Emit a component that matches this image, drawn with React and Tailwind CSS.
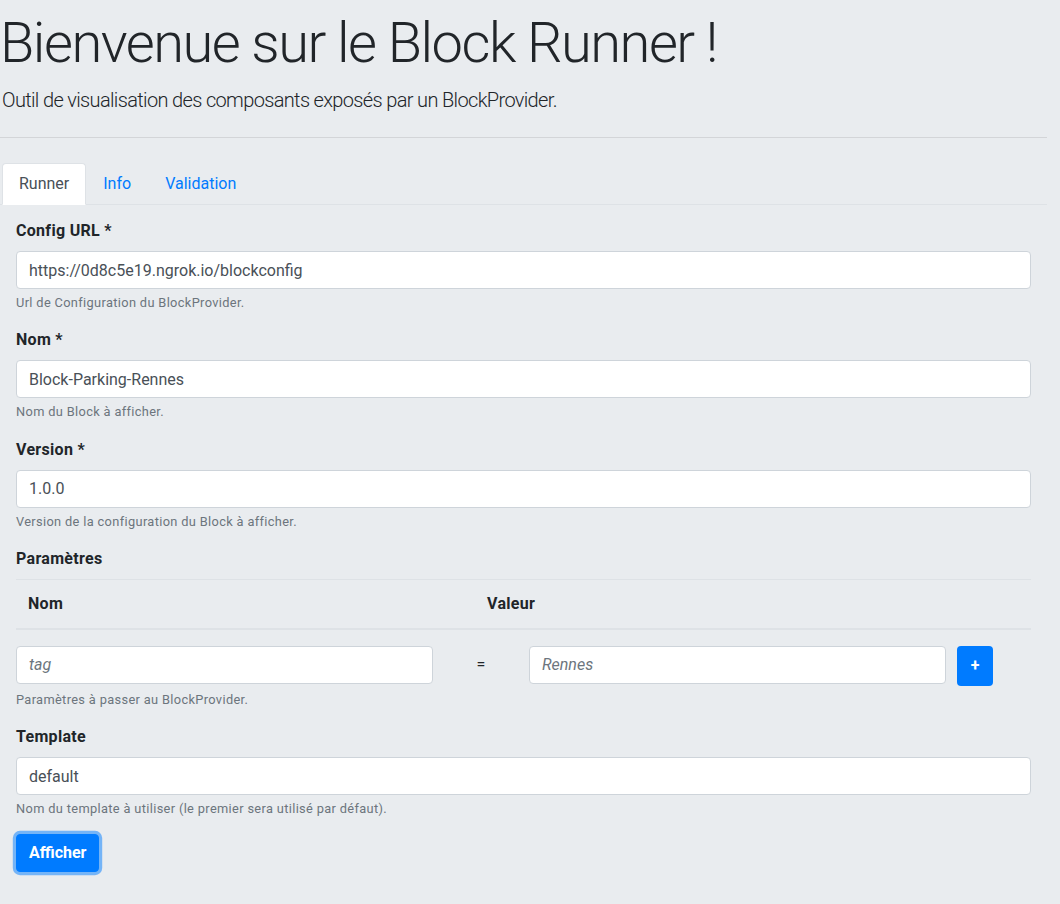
import React from "react";

const Field = ({ label, value, help }) => (
  <div className="mb-4">
    <label className="block mb-2 font-bold leading-6 tracking-[0.3px] text-[#212529]">{label}</label>
    <input
      type="text"
      defaultValue={value}
      className="block w-full h-[38px] px-3 bg-white border border-[#ced4da] rounded text-[#495057] leading-6 outline-none"
    />
    <small className="block mt-1 text-[12.8px] leading-[19.2px] tracking-[0.35px] text-[#6c757d]">{help}</small>
  </div>
);

export default function App() {
  return (
    <div
      className="min-h-screen bg-[#e9ecef] text-[#212529] text-base"
      style={{ fontFamily: "Roboto, 'Liberation Sans', sans-serif" }}
    >
      <div className="w-[1047px]">
        {/* Header */}
        <h1 className="pt-[10px] text-[56px] font-light leading-[1.2] tracking-[-1.5px]">
          Bienvenue sur le Block Runner !
        </h1>
        <p className="mt-[8px] text-[20px] font-light leading-[30px] tracking-[-0.65px] pl-[2px]">
          Outil de visualisation des composants exposés par un BlockProvider.
        </p>
        <hr className="mt-[22px] border-0 border-t border-[#d3d5d8]" />

        {/* Tabs */}
        <ul className="mt-[25px] flex pl-[2px] border-b border-[#dee2e6]">
          <li className="-mb-px">
            <span className="block px-4 py-2 leading-6 text-[#495057] bg-white border border-[#dee2e6] border-b-white rounded-t">
              Runner
            </span>
          </li>
          <li className="-mb-px">
            <a className="block px-4 py-2 leading-6 text-[#007bff] border border-transparent">Info</a>
          </li>
          <li className="-mb-px">
            <a className="block px-4 py-2 leading-6 text-[#007bff] border border-transparent">Validation</a>
          </li>
        </ul>

        {/* Tab content */}
        <div className="px-4 pt-[14px]">
          <Field
            label="Config URL *"
            value="https://0d8c5e19.ngrok.io/blockconfig"
            help="Url de Configuration du BlockProvider."
          />
          <Field label="Nom *" value="Block-Parking-Rennes" help="Nom du Block à afficher." />
          <Field label="Version *" value="1.0.0" help="Version de la configuration du Block à afficher." />

          <div className="mb-4">
            <label className="block mb-2 font-bold leading-6 tracking-[0.3px]">Paramètres</label>
            <table className="w-full mb-4 border-collapse">
              <thead>
                <tr className="border-t border-[#dee2e6] border-b-2">
                  <th className="w-[459px] p-3 text-left font-bold leading-6 tracking-[0.3px]">Nom</th>
                  <th className="p-3 text-left font-bold leading-6 tracking-[0.3px]">Valeur</th>
                </tr>
              </thead>
            </table>
            <div className="flex items-start">
              <input
                type="text"
                placeholder="tag"
                className="w-[417px] h-[38px] px-3 bg-white border border-[#ced4da] rounded text-[#495057] leading-6 outline-none placeholder:italic placeholder:text-[#6c757d]"
              />
              <div className="w-[96px] h-[38px] flex items-center justify-center text-[#212529]">=</div>
              <input
                type="text"
                placeholder="Rennes"
                className="w-[417px] h-[38px] px-3 bg-white border border-[#ced4da] rounded text-[#495057] leading-6 outline-none placeholder:italic placeholder:text-[#6c757d]"
              />
              <button className="ml-[11px] w-9 h-10 flex items-center justify-center bg-[#007bff] text-white font-bold rounded">
                +
              </button>
            </div>
            <small className="block mt-1 text-[12.8px] leading-[19.2px] tracking-[0.35px] text-[#6c757d]">
              Paramètres à passer au BlockProvider.
            </small>
          </div>

          <Field
            label="Template"
            value="default"
            help="Nom du template à utiliser (le premier sera utilisé par défaut)."
          />

          <button className="h-[38px] px-3 bg-[#007bff] text-white font-bold leading-6 rounded border border-[#007bff] shadow-[0_0_0_3.2px_rgba(0,123,255,0.5)]">
            Afficher
          </button>
        </div>
      </div>
    </div>
  );
}
